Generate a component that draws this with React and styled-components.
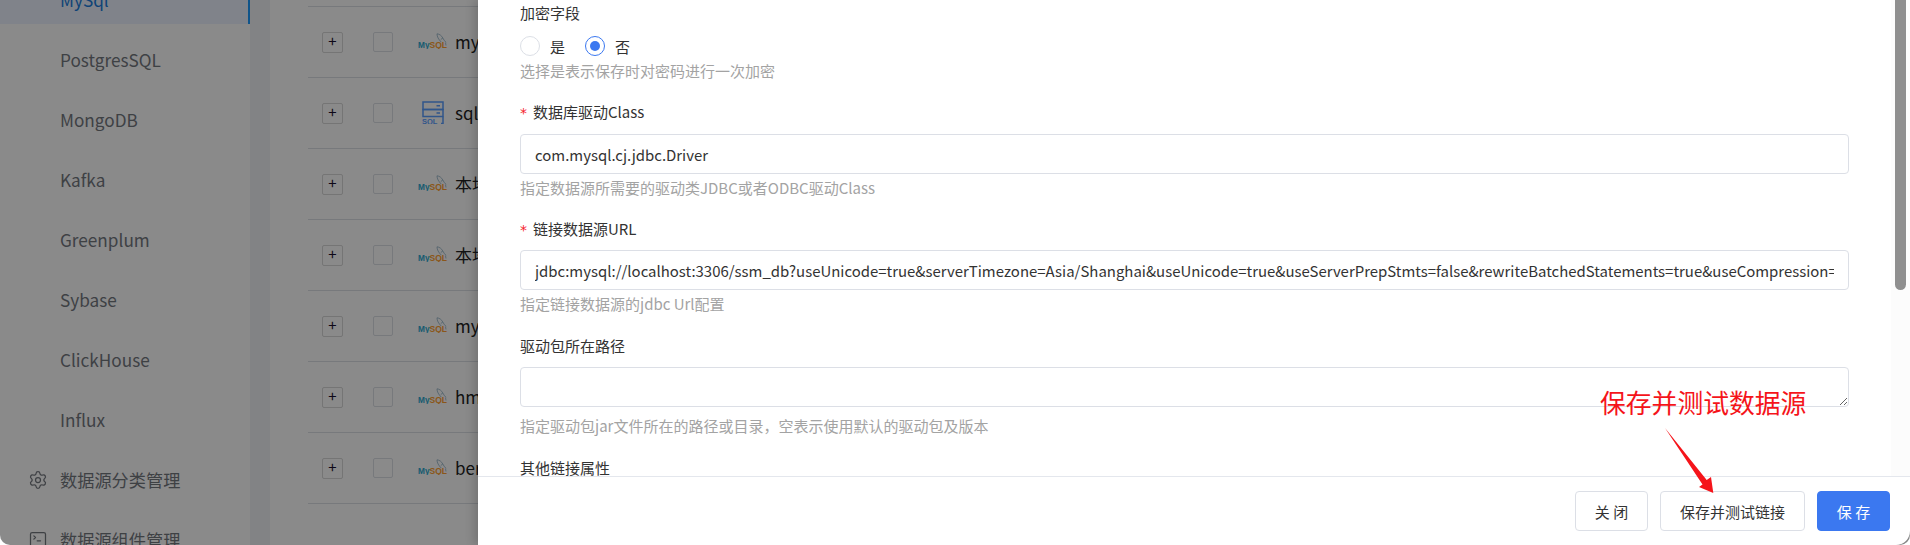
import styled, { createGlobalStyle } from "styled-components";
import { Settings, SquareTerminal } from "lucide-react";

const GlobalStyle = createGlobalStyle`
  html, body {
    margin: 0;
    padding: 0;
    background: #fff;
  }
  body {
    font-family: "Noto Sans CJK SC", "Noto Sans", sans-serif;
    font-size: 15px;
  }
`;

const Page = styled.div`
  position: relative;
  width: 1910px;
  height: 545px;
  overflow: hidden;
  display: flex;
  background: #f0f2f5;
  border-radius: 0 0 10px 10px;
`;

const Sidebar = styled.aside`
  width: 250px;
  flex: none;
  background: #fff;
  margin-top: -36px;
`;

const MenuItem = styled.div`
  height: 60px;
  display: flex;
  align-items: center;
  box-sizing: border-box;
  padding-top: 11px;
  padding-left: ${(p) => (p.$icon ? "28px" : "60px")};
  gap: 12px;
  font-size: 17.2px;
  color: ${(p) => (p.$active ? "#1c7ddc" : "#74787f")};
  background: ${(p) => (p.$active ? "#edf3ff" : "transparent")};
  border-right: ${(p) => (p.$active ? "2px solid #1c9cff" : "none")};

  svg {
    width: 20px;
    height: 20px;
    flex: none;
  }
`;

const Content = styled.main`
  flex: 1;
  margin-left: 20px;
  background: #fff;
  padding: 6px 0 0 38px;
`;

const Row = styled.div`
  height: 71px;
  box-sizing: border-box;
  display: flex;
  align-items: flex-start;
  padding: 25px 0 0 14px;
  border-top: 1px solid #dcdfe6;
  overflow: hidden;
`;

const Expand = styled.span`
  width: 21px;
  height: 21px;
  box-sizing: border-box;
  flex: none;
  display: flex;
  align-items: center;
  justify-content: center;
  padding-bottom: 4px;
  border: 1px solid #d8d8d8;
  border-radius: 2px;
  font-size: 15px;
  line-height: 1;
  color: #1a0f2e;
`;

const Check = styled.span`
  width: 20px;
  height: 20px;
  box-sizing: border-box;
  flex: none;
  margin-left: 30px;
  border: 1px solid #dcdfe6;
  border-radius: 2px;
`;

const LogoSlot = styled.span`
  width: 30px;
  height: 18px;
  flex: none;
  margin-left: 25px;
  display: flex;
  align-items: center;
  justify-content: center;
`;

const RowName = styled.span`
  margin-left: 7px;
  font-size: 17px;
  line-height: 20px;
  white-space: nowrap;
  color: #222;
`;

const Mask = styled.div`
  position: absolute;
  inset: 0;
  background: rgba(0, 0, 0, 0.46);
`;

const Drawer = styled.section`
  position: absolute;
  top: 0;
  right: 0;
  bottom: 0;
  width: 1432px;
  background: #fff;
  display: flex;
  flex-direction: column;
  border-bottom-right-radius: 14px;
  box-shadow: -4px 0 10px rgba(0, 0, 0, 0.16);
`;

const Body = styled.div`
  flex: 1;
  min-height: 0;
  display: flex;
  overflow: hidden;
`;

const Form = styled.div`
  flex: 1;
  min-width: 0;
  padding: 1px 42px 0 42px;
`;

const Field = styled.div`
  margin-bottom: ${(p) => p.$gap}px;
`;

const Label = styled.div`
  height: 24px;
  line-height: 24px;
  font-size: 15px;
  color: #333;
  margin-bottom: ${(p) => p.$gap}px;
  display: flex;
  align-items: center;

  &::before {
    content: ${(p) => (p.$required ? '"*"' : "none")};
    color: #f5222d;
    width: 13px;
    font-family: "DejaVu Sans", sans-serif;
    font-size: 14px;
    position: relative;
    top: 1px;
  }
`;

const Help = styled.div`
  height: 22px;
  line-height: 22px;
  margin-top: ${(p) => p.$top || 3}px;
  font-size: 15px;
  color: #a3a3a3;
  white-space: nowrap;
`;

const RadioGroup = styled.div`
  display: flex;
  align-items: center;
  height: 20px;
`;

const RadioDot = styled.span`
  width: 20px;
  height: 20px;
  box-sizing: border-box;
  border-radius: 50%;
  border: 1px solid ${(p) => (p.$on ? "#3b78f0" : "#dcdfe6")};
  display: flex;
  align-items: center;
  justify-content: center;

  &::after {
    content: "";
    display: ${(p) => (p.$on ? "block" : "none")};
    width: 10px;
    height: 10px;
    border-radius: 50%;
    background: #3b78f0;
  }
`;

const RadioText = styled.span`
  margin: 0 20px 0 10px;
  font-size: 15px;
  color: #333;
`;

const Input = styled.input`
  display: block;
  width: 100%;
  height: 40px;
  box-sizing: border-box;
  padding: 0 14px;
  border: 1px solid #dcdfe6;
  border-radius: 4px;
  outline: none;
  font-family: inherit;
  font-size: 14.950px;
  color: #333;
`;

const TextArea = styled.textarea`
  display: block;
  width: 100%;
  height: 40px;
  box-sizing: border-box;
  padding: 5px 14px;
  border: 1px solid #dcdfe6;
  border-radius: 4px;
  outline: none;
  font-family: inherit;
  font-size: 15px;
`;

const ScrollTrack = styled.div`
  width: 19px;
  flex: none;
  background: #fcfcfc;
  display: flex;
  justify-content: center;
`;

const ScrollThumb = styled.div`
  width: 11px;
  height: 290px;
  background: #8f8f8f;
  border-radius: 0 0 6px 6px;
`;

const Footer = styled.footer`
  height: 69px;
  flex: none;
  box-sizing: border-box;
  border-top: 1px solid #e4e7ed;
  display: flex;
  justify-content: flex-end;
  align-items: flex-start;
  gap: 12px;
  padding: 14px 20px 0 0;
`;

const Button = styled.button`
  height: 40px;
  width: ${(p) => p.$width}px;
  box-sizing: border-box;
  border: 1px solid ${(p) => (p.$primary ? "#3b78f0" : "#dcdfe6")};
  border-radius: 4px;
  background: ${(p) => (p.$primary ? "#3b78f0" : "#fff")};
  color: ${(p) => (p.$primary ? "#fff" : "#333")};
  font-family: inherit;
  font-size: 15px;
  padding: 0;
`;

const Note = styled.div`
  position: absolute;
  left: 1600px;
  top: 383px;
  font-size: 25.800px;
  line-height: 38px;
  color: #f5141a;
  white-space: nowrap;
`;

const Arrow = styled.svg`
  position: absolute;
  left: 1660px;
  top: 425px;
`;

const MysqlLogo = () => (
  <svg width="30" height="16" viewBox="0 0 30 16">
    <path
      d="M19 .8c2.500.2 4.500 1.800 5.800 4.200.8 1.500 1.700 3 3.200 4.300M19 .8c0 3 1.500 5.500 4.200 8.200M24.800 5l-2 1.500M27.500 9.500l.5 3"
      fill="none"
      stroke="#8fb0c4"
      strokeWidth="0.8"
    />
    <text x="0" y="14.500" fontSize="8.500" fontWeight="700" fill="#2ba8d0" textLength="11.500" lengthAdjust="spacingAndGlyphs" fontFamily="Liberation Sans, sans-serif">
      My
    </text>
    <text x="11.500" y="14.500" fontSize="8.500" fontWeight="700" fill="#ffa030" textLength="17.500" lengthAdjust="spacingAndGlyphs" fontFamily="Liberation Sans, sans-serif">
      SQL
    </text>
  </svg>
);

const SqlIcon = () => (
  <svg width="22" height="23" viewBox="0 0 22 23">
    <g fill="none" stroke="#5a9eff" strokeWidth="1.500">
      <rect x="1" y="1" width="20" height="7.500" />
      <rect x="1" y="8.500" width="20" height="7" />
      <path d="M21 15.500v7h-2" />
      <path d="M14.500 4.800h3.500M14.500 12h3.500" />
    </g>
    <text x="0" y="22.500" fontSize="7.500" fontWeight="700" fill="#5a9eff" fontFamily="Liberation Sans, sans-serif">
      SQL
    </text>
  </svg>
);

const rows = [
  { name: "mysql" },
  { name: "sqlite", sql: true },
  { name: "本地" },
  { name: "本地" },
  { name: "mysql" },
  { name: "hm" },
  { name: "ber" },
];

const menu = ["PostgresSQL", "MongoDB", "Kafka", "Greenplum", "Sybase", "ClickHouse", "Influx"];

export default function App() {
  return (
    <Page>
      <GlobalStyle />
      <Sidebar>
        <MenuItem $active>MySql</MenuItem>
        {menu.map((m) => (
          <MenuItem key={m}>{m}</MenuItem>
        ))}
        <MenuItem $icon>
          <Settings strokeWidth={1.500} />
          数据源分类管理
        </MenuItem>
        <MenuItem $icon>
          <SquareTerminal strokeWidth={1.500} />
          数据源组件管理
        </MenuItem>
      </Sidebar>
      <Content>
        {rows.map((r, i) => (
          <Row key={i}>
            <Expand>+</Expand>
            <Check />
            <LogoSlot>{r.sql ? <SqlIcon /> : <MysqlLogo />}</LogoSlot>
            <RowName>{r.name}</RowName>
          </Row>
        ))}
        <Row />
      </Content>
      <Mask />
      <Drawer>
        <Body>
          <Form>
            <Field $gap={18}>
              <Label $gap={11}>加密字段</Label>
              <RadioGroup>
                <RadioDot />
                <RadioText>是</RadioText>
                <RadioDot $on />
                <RadioText>否</RadioText>
              </RadioGroup>
              <Help $top={4}>选择是表示保存时对密码进行一次加密</Help>
            </Field>
            <Field $gap={18}>
              <Label $required $gap={10}>
                数据库驱动Class
              </Label>
              <Input readOnly value="com.mysql.cj.jdbc.Driver" />
              <Help>指定数据源所需要的驱动类JDBC或者ODBC驱动Class</Help>
            </Field>
            <Field $gap={19}>
              <Label $required $gap={9}>
                链接数据源URL
              </Label>
              <Input
                readOnly
                value="jdbc:mysql://localhost:3306/ssm_db?useUnicode=true&serverTimezone=Asia/Shanghai&useUnicode=true&useServerPrepStmts=false&rewriteBatchedStatements=true&useCompression=true"
              />
              <Help>指定链接数据源的jdbc Url配置</Help>
            </Field>
            <Field $gap={19}>
              <Label $gap={9}>驱动包所在路径</Label>
              <TextArea readOnly />
              <Help $top={8}>指定驱动包jar文件所在的路径或目录，空表示使用默认的驱动包及版本</Help>
            </Field>
            <Field $gap={0}>
              <Label $gap={0}>其他链接属性</Label>
            </Field>
          </Form>
          <ScrollTrack>
            <ScrollThumb />
          </ScrollTrack>
        </Body>
        <Footer>
          <Button $width={73}>关 闭</Button>
          <Button $width={145}>保存并测试链接</Button>
          <Button $width={73} $primary>
            保 存
          </Button>
        </Footer>
      </Drawer>
      <Note>保存并测试数据源</Note>
      <Arrow width="60" height="75" viewBox="0 0 60 75">
        <path d="M5 3 L46.700 55 L51 52 L53.300 68 L39 62 L42.500 59.500 Z" fill="#f5141a" />
      </Arrow>
    </Page>
  );
}
